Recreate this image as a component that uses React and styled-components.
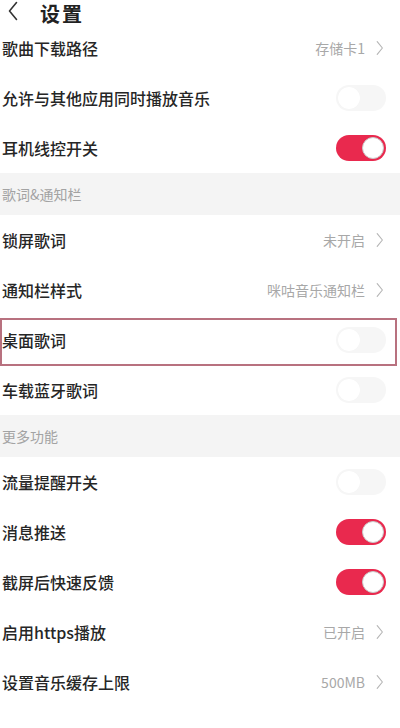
import React from 'react'
import styled, { createGlobalStyle } from 'styled-components'

const GlobalStyle = createGlobalStyle`
  html, body {
    margin: 0;
    padding: 0;
    background: #ffffff;
  }
  body {
    font-family: "Noto Sans CJK SC", "Noto Sans", sans-serif;
  }
`

const sections = [
  {
    items: [
      { label: '歌曲下载路径', value: '存储卡1' },
      { label: '允许与其他应用同时播放音乐', toggle: false },
      { label: '耳机线控开关', toggle: true },
    ],
  },
  {
    title: '歌词&通知栏',
    items: [
      { label: '锁屏歌词', value: '未开启' },
      { label: '通知栏样式', value: '咪咕音乐通知栏' },
      { label: '桌面歌词', toggle: false, marked: true },
      { label: '车载蓝牙歌词', toggle: false },
    ],
  },
  {
    title: '更多功能',
    items: [
      { label: '流量提醒开关', toggle: false },
      { label: '消息推送', toggle: true },
      { label: '截屏后快速反馈', toggle: true },
      { label: '启用https播放', value: '已开启' },
      { label: '设置音乐缓存上限', value: '500MB' },
    ],
  },
]

function Chevron({ left, size = 18, color }) {
  return (
    <svg width={size / 2} height={size} viewBox="0 0 10 20" fill="none">
      <path
        d={left ? 'M8.5 1.5 L1.5 10 L8.5 18.5' : 'M1.5 2 L8 10 L1.5 18'}
        stroke={color}
        strokeWidth={left ? 1.6 : 1.4}
        strokeLinecap="round"
        strokeLinejoin="round"
      />
    </svg>
  )
}

function App() {
  return (
    <Page>
      <GlobalStyle />
      <Header>
        <BackButton>
          <Chevron left size={20} color="#333" />
        </BackButton>
        <Title>设置</Title>
      </Header>
      {sections.map((section, i) => (
        <React.Fragment key={i}>
          {section.title && <SectionTitle>{section.title}</SectionTitle>}
          {section.items.map((item) => (
            <Row key={item.label} marked={item.marked}>
              <Label>{item.label}</Label>
              {item.value !== undefined && (
                <Right>
                  <Value>{item.value}</Value>
                  <Chevron size={16} color="#b5b5b5" />
                </Right>
              )}
              {item.toggle !== undefined && (
                <Switch on={item.toggle}>
                  <Knob on={item.toggle} />
                </Switch>
              )}
            </Row>
          ))}
        </React.Fragment>
      ))}
    </Page>
  )
}

export default App

const Page = styled.div`
  width: 400px;
  height: 728px;
  overflow: hidden;
  background: #ffffff;
`

const Header = styled.div`
  height: 23px;
  display: flex;
  align-items: flex-start;
`

const BackButton = styled.div`
  width: 40px;
  padding-left: 8px;
  display: flex;
  align-items: center;
  margin-top: 1px;
  box-sizing: border-box;
`

const Title = styled.div`
  font-size: 20px;
  line-height: 29px;
  margin-top: -1px;
  font-weight: 700;
  color: #222;
  letter-spacing: 2px;
`

const SectionTitle = styled.div`
  height: 42px;
  display: flex;
  align-items: center;
  padding-left: 2px;
  background: #f4f4f4;
  color: #a3a3a3;
  font-size: 14px;
`

const Row = styled.div`
  position: relative;
  height: 50px;
  display: flex;
  align-items: center;
  justify-content: space-between;
  padding: 0 14px 0 2px;

  &::after {
    content: '';
    display: ${(p) => (p.marked ? 'block' : 'none')};
    position: absolute;
    left: 0;
    top: 3px;
    right: 3px;
    bottom: -1px;
    border: 2px solid #b8717f;
    pointer-events: none;
  }
`

const Label = styled.div`
  font-size: 16px;
  font-weight: 500;
  color: #262626;
`

const Right = styled.div`
  display: flex;
  align-items: center;
  gap: 11px;
  padding-right: 2px;
`

const Value = styled.div`
  font-size: 14px;
  color: #a8a8a8;
`

const Switch = styled.div`
  position: relative;
  width: 50px;
  height: 26px;
  border-radius: 13px;
  box-sizing: border-box;
  background: ${(p) => (p.on ? '#e9294e' : '#f6f6f6')};
`

const Knob = styled.div`
  position: absolute;
  top: 2px;
  left: ${(p) => (p.on ? '26px' : '2px')};
  width: 22px;
  height: 22px;
  border-radius: 50%;
  background: #fff;
  box-sizing: border-box;
  border: ${(p) => (p.on ? '1px solid #c9c9c9' : 'none')};
  box-shadow: ${(p) => (p.on ? 'none' : '0 0 1px rgba(0,0,0,0.03)')};
`
